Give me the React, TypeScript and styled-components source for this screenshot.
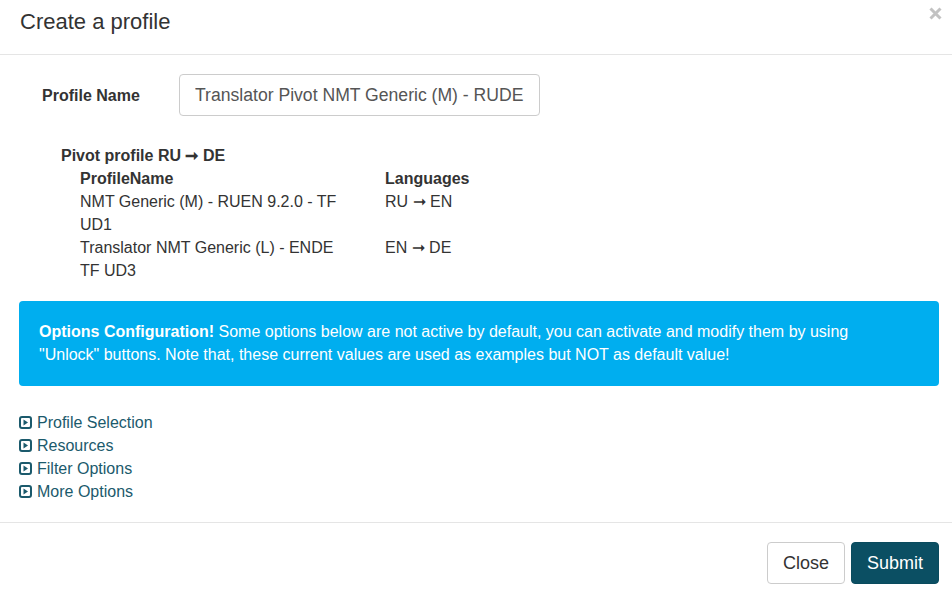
import React from "react";
import styled, { createGlobalStyle } from "styled-components";

const GlobalStyle = createGlobalStyle`
	body {
		margin: 0;
		background: #fff;
		font-family: "Liberation Sans", Arial, sans-serif;
		color: #333;
	}
`;

const Modal = styled.div`
	width: 952px;
	background: #fff;
`;

const Header = styled.div`
	display: flex;
	justify-content: space-between;
	align-items: flex-start;
	padding: 9px 10px 0 20px;
	height: 45px;
	border-bottom: 1px solid #e5e5e5;
`;

const Title = styled.h4`
	margin: 0;
	font-size: 22px;
	font-weight: normal;
	line-height: 26px;
	color: #333;
`;

const CloseX = styled.svg`
	margin-top: -2px;
`;

const Body = styled.div`
	padding: 19px 13px 19px 19px;
`;

const FormRow = styled.div`
	display: flex;
	align-items: center;
	padding-left: 23px;
`;

const Label = styled.label`
	width: 137px;
	font-size: 16px;
	font-weight: bold;
	padding-top: 2px;
`;

const Input = styled.input`
	width: 361px;
	height: 42px;
	box-sizing: border-box;
	padding: 0 10px 0 15px;
	border: 1px solid #ccc;
	border-radius: 4px;
	font-family: inherit;
	font-size: 17.6px;
	color: #555;
`;

const Pivot = styled.div`
	margin: 28px 0 0 42px;
	font-size: 16px;
	line-height: 23px;
`;

const PivotTitle = styled.div`
	font-weight: bold;
`;

const Table = styled.table`
	margin-left: 19px;
	border-collapse: collapse;
	font-size: 16px;
	line-height: 23px;
`;

const Th = styled.th<{ $w?: number }>`
	text-align: left;
	padding: 0;
	width: ${p => (p.$w ? `${p.$w}px` : "auto")};
`;

const Td = styled.td<{ $w?: number }>`
	padding: 0;
	vertical-align: top;
	width: ${p => (p.$w ? `${p.$w}px` : "auto")};
	padding-right: ${p => (p.$w ? "40px" : "0")};
`;

const Alert = styled.div`
	margin-top: 19px;
	background: #00aeef;
	color: #fff;
	border-radius: 4px;
	padding: 19px 60px 20px 20px;
	font-size: 16px;
	line-height: 23px;
`;

const Links = styled.div`
	margin-top: 25px;
	display: flex;
	flex-direction: column;
`;

const Link = styled.a`
	display: flex;
	align-items: center;
	gap: 5px;
	font-size: 16px;
	line-height: 23px;
	color: #1b5a6c;
	text-decoration: none;
	cursor: pointer;
`;

const Footer = styled.div`
	display: flex;
	justify-content: flex-end;
	gap: 6px;
	padding: 19px 13px 20px;
	border-top: 1px solid #e5e5e5;
`;

const Button = styled.button<{ $primary?: boolean }>`
	height: 42px;
	padding: 0 15px;
	border-radius: 4px;
	font-family: inherit;
	font-size: 18px;
	border: 1px solid ${p => (p.$primary ? "#0a4b5e" : "#ccc")};
	background: ${p => (p.$primary ? "#0b4f63" : "#fff")};
	color: ${p => (p.$primary ? "#fff" : "#333")};
`;

const PlayIcon = () => (
	<svg width="13" height="13" viewBox="0 0 13 13">
		<rect x="1" y="1" width="11" height="11" rx="2" fill="none" stroke="#1b5a6c" strokeWidth="2" />
		<path d="M4.5 3.5 L9 6.5 L4.5 9.5 Z" fill="#1b5a6c" />
	</svg>
);

const rows = [
	{ name: "NMT Generic (M) - RUEN 9.2.0 - TF UD1", langs: "RU ➞ EN" },
	{ name: "Translator NMT Generic (L) - ENDE TF UD3", langs: "EN ➞ DE" },
];

const links = ["Profile Selection", "Resources", "Filter Options", "More Options"];

const App = () => {
	return (
		<Modal>
			<GlobalStyle />
			<Header>
				<Title>Create a profile</Title>
				<CloseX width="13" height="13" viewBox="0 0 13 13">
					<path d="M1.5 1.5 L11.5 11.5 M11.5 1.5 L1.5 11.5" stroke="#c2c2c2" strokeWidth="3" />
				</CloseX>
			</Header>
			<Body>
				<FormRow>
					<Label>Profile Name</Label>
					<Input defaultValue="Translator Pivot NMT Generic (M) - RUDE" />
				</FormRow>
				<Pivot>
					<PivotTitle>Pivot profile RU ➞ DE</PivotTitle>
					<Table>
						<thead>
							<tr>
								<Th $w={305}>ProfileName</Th>
								<Th>Languages</Th>
							</tr>
						</thead>
						<tbody>
							{rows.map(r => (
								<tr key={r.name}>
									<Td $w={265}>{r.name}</Td>
									<Td>{r.langs}</Td>
								</tr>
							))}
						</tbody>
					</Table>
				</Pivot>
				<Alert>
					<b>Options Configuration!</b> Some options below are not active by default, you can activate and modify them by using "Unlock" buttons. Note that, these current values are used as examples but NOT as default value!
				</Alert>
				<Links>
					{links.map(l => (
						<Link key={l}>
							<PlayIcon />
							{l}
						</Link>
					))}
				</Links>
			</Body>
			<Footer>
				<Button>Close</Button>
				<Button $primary>Submit</Button>
			</Footer>
		</Modal>
	);
};

export default App;
